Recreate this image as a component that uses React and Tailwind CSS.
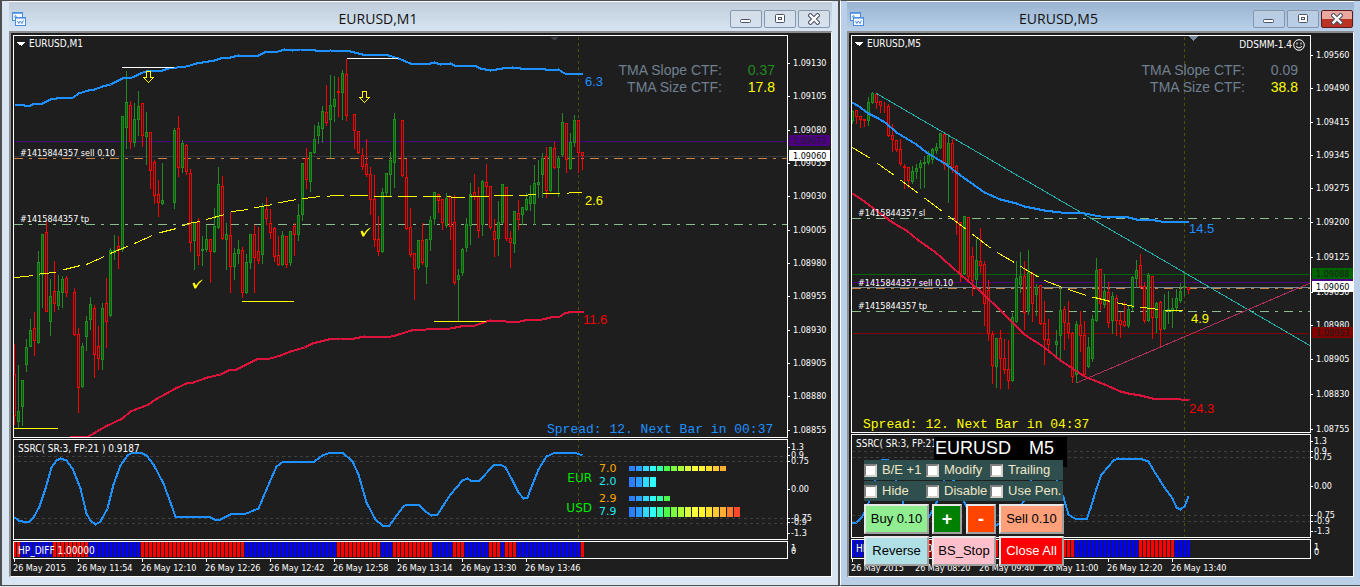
const UI = "font-['DejaVu_Sans_Condensed','Noto_Sans',sans-serif]";
const ARIAL = "font-['Liberation_Sans',Arial,sans-serif]";

// [direction, high, low, body top, body bottom], one slot every 4px, null = no bar
const M1_CANDLES = [
  ["r", 343, 424, 374, 415], ["g", 364, 427, 411, 421], ["g", 379, 425, 380, 406],
  ["g", 338, 371, 347, 364], ["g", 318, 346, 330, 346], ["r", 311, 355, 328, 340],
  ["g", 250, 343, 262, 342], ["g", 234, 307, 234, 274], ["r", 220, 311, 232, 311],
  ["g", 278, 335, 296, 321], ["r", 260, 311, 291, 303], ["g", 274, 309, 291, 305],
  ["g", 275, 307, 279, 292], ["r", 275, 296, 278, 292], null,
  ["r", 287, 335, 292, 334], ["r", 327, 412, 334, 387], ["g", 342, 387, 346, 386],
  ["g", 315, 350, 321, 336], ["g", 296, 329, 304, 319], ["r", 304, 377, 308, 354],
  ["r", 325, 369, 346, 358], ["g", 302, 369, 308, 359], ["r", 277, 347, 303, 321],
  ["g", 247, 316, 250, 315], ["g", 234, 259, 250, 252], ["r", 235, 268, 246, 249],
  ["g", 116, 251, 116, 249], ["g", 70, 148, 102, 127], ["r", 100, 148, 105, 141],
  ["g", 102, 146, 119, 142], ["g", 90, 135, 106, 119], ["r", 103, 146, 103, 135],
  ["g", 111, 164, 132, 136], ["r", 132, 188, 132, 170], ["r", 159, 203, 162, 195],
  ["r", 179, 216, 194, 202], ["g", 162, 204, 200, 203], null, null,
  ["g", 127, 208, 130, 202], ["r", 115, 176, 128, 167], ["g", 139, 172, 143, 167],
  ["r", 143, 174, 145, 171], ["r", 168, 251, 173, 242], ["g", 222, 269, 222, 240],
  ["r", 217, 264, 221, 255], ["g", 235, 265, 249, 250], ["g", 224, 251, 239, 249],
  ["r", 238, 282, 239, 251], ["g", 207, 252, 226, 251], ["g", 166, 228, 184, 227],
  ["r", 175, 239, 186, 238], ["g", 222, 269, 234, 239], ["r", 211, 292, 235, 266],
  ["g", 247, 279, 253, 266], ["g", 239, 263, 249, 253], ["r", 246, 297, 250, 292],
  ["g", 253, 293, 262, 292], ["g", 233, 268, 234, 262], ["r", 224, 292, 234, 257],
  ["r", 226, 263, 251, 260], ["g", 202, 263, 206, 254], ["r", 196, 224, 209, 218],
  ["r", 208, 238, 223, 232], ["r", 226, 261, 228, 256], ["r", 235, 265, 255, 264],
  ["g", 230, 265, 235, 264], ["r", 235, 267, 236, 264], ["g", 231, 265, 231, 262],
  ["r", 222, 255, 226, 234], ["g", 203, 240, 215, 234], ["g", 163, 220, 163, 214],
  ["r", 147, 188, 158, 179], ["g", 151, 191, 152, 181], ["g", 124, 153, 139, 152],
  ["g", 121, 143, 126, 135], ["g", 105, 142, 111, 128], ["r", 84, 125, 112, 122],
  ["g", 74, 157, 105, 119], ["g", 75, 121, 99, 106], ["r", 76, 116, 91, 92],
  ["g", 69, 119, 73, 92], ["r", 58, 120, 74, 115], null,
  ["r", 114, 148, 114, 130], ["r", 130, 153, 131, 152], ["r", 147, 169, 155, 166],
  ["r", 138, 176, 164, 174], ["r", 166, 214, 174, 199], ["r", 174, 246, 199, 239],
  ["r", 215, 255, 239, 251], ["g", 187, 252, 192, 251], ["g", 173, 195, 173, 192],
  ["g", 151, 196, 160, 174], ["g", 112, 187, 119, 162], null,
  ["r", 119, 176, 120, 175], ["r", 158, 229, 177, 228], ["r", 207, 256, 227, 254],
  ["r", 253, 299, 253, 268], ["g", 239, 269, 240, 267], ["r", 222, 264, 240, 262],
  ["g", 239, 283, 239, 266], ["g", 215, 250, 220, 239], ["g", 192, 224, 192, 218],
  ["r", 193, 212, 194, 200], ["r", 198, 229, 199, 222], ["g", 192, 227, 198, 225],
  ["r", 196, 239, 196, 226], ["r", 194, 284, 222, 282], ["g", 268, 321, 275, 279],
  ["g", 247, 275, 249, 272], ["g", 217, 251, 224, 247], ["g", 182, 244, 194, 225],
  ["r", 173, 199, 192, 196], ["r", 186, 237, 196, 230], ["g", 179, 235, 181, 224],
  ["r", 163, 196, 182, 186], ["r", 186, 229, 186, 227], ["r", 218, 256, 231, 239],
  ["g", 200, 255, 222, 238], ["g", 183, 223, 184, 222], ["r", 187, 240, 187, 238],
  ["r", 230, 267, 238, 242], ["g", 210, 252, 211, 243], ["r", 199, 229, 213, 219],
  ["g", 207, 224, 207, 214], ["g", 192, 210, 199, 209], ["g", 184, 210, 196, 203],
  ["g", 164, 224, 183, 203], ["g", 159, 197, 182, 184], ["g", 152, 197, 158, 174],
  ["r", 146, 197, 156, 190], ["g", 147, 191, 147, 190], ["r", 141, 168, 148, 167],
  ["g", 155, 196, 158, 167], ["g", 112, 156, 122, 154], ["r", 123, 172, 123, 159],
  ["g", 132, 169, 142, 168], ["g", 114, 146, 120, 142], ["r", 120, 172, 120, 152],
  ["r", 152, 169, 152, 155],
];

const M5_CANDLES = [
  ["g", 109, 123, 111, 120], ["r", 110, 123, 110, 116], ["r", 115, 127, 116, 119],
  ["r", 119, 126, 119, 120], ["g", 96, 125, 102, 120], ["g", 91, 103, 93, 102],
  ["r", 93, 108, 94, 102], ["r", 101, 112, 101, 105], ["r", 101, 112, 106, 106],
  ["r", 103, 136, 106, 135], ["r", 123, 151, 135, 139], ["r", 139, 151, 140, 149],
  ["r", 138, 165, 149, 163], ["r", 163, 188, 166, 167], ["r", 167, 187, 167, 180],
  ["g", 165, 183, 171, 181], ["g", 163, 178, 168, 171], ["g", 159, 188, 163, 167],
  ["g", 155, 187, 162, 163], ["g", 150, 164, 155, 162], ["g", 147, 163, 149, 159],
  ["g", 142, 153, 147, 150], ["g", 133, 148, 133, 147], ["r", 133, 169, 134, 164],
  ["g", 133, 202, 143, 164], ["r", 138, 172, 143, 167], ["r", 164, 234, 166, 221],
  ["r", 222, 281, 222, 273], ["g", 216, 274, 216, 273], ["r", 217, 281, 217, 276],
  ["r", 246, 295, 256, 280], ["g", 238, 287, 260, 279], ["r", 227, 272, 261, 265],
  ["r", 260, 325, 264, 303], ["r", 279, 340, 290, 333], ["r", 330, 383, 334, 365],
  ["g", 337, 387, 338, 366], ["r", 329, 388, 338, 358], ["r", 338, 373, 358, 369],
  ["r", 339, 388, 369, 380], ["g", 312, 381, 317, 380], ["g", 260, 322, 278, 321],
  ["g", 251, 292, 276, 284], ["r", 260, 329, 276, 312], ["g", 249, 314, 272, 311],
  ["r", 271, 321, 273, 303], ["g", 283, 315, 287, 294], ["r", 285, 324, 285, 323],
  ["r", 300, 364, 323, 339], ["r", 318, 352, 339, 344], null,
  ["g", 329, 356, 341, 344], ["g", 287, 361, 310, 335], ["r", 305, 349, 309, 322],
  ["r", 300, 338, 323, 332], ["r", 331, 382, 333, 376], ["g", 320, 382, 324, 374],
  ["r", 310, 351, 325, 335], ["r", 320, 376, 335, 374], ["g", 336, 367, 347, 366],
  ["g", 314, 361, 319, 358], ["g", 257, 321, 270, 320], ["r", 269, 309, 269, 303],
  ["g", 273, 307, 291, 304], ["r", 281, 327, 292, 322], ["g", 291, 333, 296, 320],
  ["r", 294, 335, 298, 320], ["r", 311, 337, 320, 324], ["r", 301, 326, 321, 325],
  ["g", 305, 327, 309, 325], ["g", 275, 310, 277, 307], ["g", 259, 287, 270, 278],
  ["r", 253, 288, 265, 286], ["r", 281, 322, 286, 320], ["g", 272, 321, 275, 320],
  ["r", 275, 338, 276, 317], ["g", 301, 332, 303, 317], ["r", 300, 346, 302, 329],
  ["g", 293, 329, 310, 328], ["g", 290, 323, 309, 310], ["g", 297, 327, 308, 311],
  ["g", 288, 311, 298, 307], ["g", 282, 302, 291, 300], ["g", 272, 295, 286, 287],
  ["r", 286, 293, 287, 289],
];

const M1_UPPER =
  "14,104 20,104 24,105 30,105 34,103 42,103 50,99 56,98 73,97 78,93 88,90 94,89 102,86 110,84 122,78 132,77 140,73 148,70 162,70 168,68 186,66 196,63 214,60 220,58 230,57 238,55 256,56 264,52 278,51 284,49 292,50 300,49 310,49 320,51 330,50 350,51 362,54 376,54 388,55 398,58 410,63 430,63 434,62 440,64 450,63 454,65 474,65 480,68 490,70 502,68 512,67 520,68 540,68 550,70 558,69 564,73 572,74 583,73";
const M1_MIDDLE =
  "14,277 26,276 42,273 56,272 64,269 80,265 86,264 104,256 112,252 134,243 152,235 160,232 176,228 188,223 200,221 206,219 224,214 232,211 248,209 256,207 272,204 280,202 296,199 304,198 320,196 340,195 400,196 440,196 460,197 500,195 524,195 540,193 556,193 582,192";
const M1_LOWER =
  "70,437 88,436 105,426 122,418 130,411 148,404 155,399 166,393 175,388 186,383 193,382 207,377 220,374 228,370 236,369 248,363 256,359 270,358 280,355 290,351 304,347 312,343 328,339 340,338 354,338 364,336 386,337 395,335 411,330 426,329 450,328 460,326 475,325 486,321 490,320 505,321 515,322 524,320 542,319 550,317 560,316 564,313 572,311 583,311";
const M1_SSRC =
  "14,517 18,520 22,521 29,521 33,517 39,506 45,488 51,467 56,460 60,458 66,460 72,468 80,488 86,513 90,520 95,524 100,521 107,508 113,484 120,465 127,455 132,452 140,452 146,455 153,464 163,483 170,502 175,516 182,516 208,516 214,519 220,519 230,514 246,513 258,508 266,489 276,466 283,461 314,461 322,455 330,452 342,452 352,461 358,474 366,502 375,519 382,525 389,525 394,518 402,507 406,504 418,504 425,511 431,515 437,514 450,494 462,480 467,478 470,480 479,480 494,464 500,464 505,467 512,480 518,492 523,498 527,497 532,484 538,469 546,456 555,452 574,452 582,455";

const M5_UPPER =
  "852,102 860,107 868,113 878,118 886,123 896,132 906,138 916,144 926,152 936,158 946,164 960,175 970,182 984,192 1000,199 1016,203 1024,206 1044,210 1060,212 1084,213 1100,216 1128,217 1136,219 1150,219 1160,221 1180,222 1189,221";
const M5_MIDDLE =
  "852,147 870,158 894,175 918,193 942,211 966,229 988,246 1000,254 1014,262 1030,272 1044,280 1062,287 1086,295 1110,301 1134,306 1158,309 1170,310 1184,310";
const M5_LOWER =
  "852,193 864,201 880,213 892,222 906,230 918,240 934,251 960,274 980,291 1000,310 1024,334 1044,347 1060,360 1075,370 1086,377 1094,380 1104,384 1120,391 1128,393 1140,395 1152,398 1172,398 1189,400";
const M5_SSRC =
  "852,523 856,522 861,517 866,509 872,490 878,468 882,459 887,459 895,478 903,504 910,522 920,524 928,517 935,505 942,484 947,470 953,480 964,502 975,524 997,524 1010,518 1024,500 1032,476 1042,466 1056,478 1063,497 1068,514 1074,518 1086,519 1090,508 1096,488 1101,474 1108,466 1113,460 1118,458 1142,459 1148,461 1155,473 1164,487 1172,498 1176,507 1180,509 1184,506 1188,496";

// [colour, number of bars]
const M1_DIFF = [
  ["r", 2], ["b", 8], ["r", 9], ["b", 13], ["r", 26], ["b", 23], ["r", 11], ["b", 3], ["r", 10],
  ["b", 5], ["r", 3], ["b", 6], ["r", 3], ["b", 1], ["r", 3], ["b", 16], ["r", 1],
];
const M5_DIFF = [["b", 18], ["r", 38], ["b", 16], ["r", 9], ["b", 4]];

const STRENGTH_COLORS = [
  "bg-[#2b7fff]", "bg-[#2b9cff]", "bg-[#2fdcff]", "bg-[#2ffcff]", "bg-[#2fffa8]", "bg-[#4cf84c]",
  "bg-[#7cff3a]", "bg-[#a8ff3a]", "bg-[#d8ff3a]", "bg-[#fdff3a]", "bg-[#fff52a]", "bg-[#ffe030]",
  "bg-[#ffc830]", "bg-[#ffb030]", "bg-[#ff7a2a]", "bg-[#ff4a2a]",
];

function Candles({ data, start }) {
  return data.map((c, i) => {
    if (!c) return null;
    const [dir, high, low, top, bottom] = c;
    const x = start + i * 4;
    return (
      <g key={x} stroke={dir === "g" ? "#228b22" : "#ff0000"}>
        <line x1={x} x2={x} y1={high} y2={low} />
        <rect x={x - 1} y={top} width={2} height={bottom - top} fill={dir === "g" ? "#006400" : "#1e1e1e"} />
      </g>
    );
  });
}

function DiffBars({ runs, start, y, height }) {
  const bars = runs.flatMap(([color, count]) => Array(count).fill(color));
  return bars.map((color, i) => (
    <rect key={i} x={start + i * 4 - 1} y={y} width={3} height={height} fill={color === "r" ? "#ff0000" : "#0000ff"} />
  ));
}

function HLine({ y, color, dash, from = 0, to = 2400 }) {
  return <line x1={from - 0.5} x2={to - 0.5} y1={y} y2={y} stroke={color} strokeDasharray={dash} />;
}

function VLine({ x }) {
  return <line x1={x} x2={x} y1={0} y2={700} stroke="#4f4f08" strokeDasharray="3 3" />;
}

// Dashes keep the same width on the time scale whatever the slope: 18px on, 6px off
function DashedCurve({ points, color }) {
  const pts = points.split(" ").map((p) => p.split(",").map(Number));
  const end = pts[pts.length - 1][0];
  const yAt = (x) => {
    const i = Math.max(1, pts.findIndex((p) => p[0] >= x));
    const [x0, y0] = pts[i - 1];
    const [x1, y1] = pts[i];
    return y0 + ((y1 - y0) * (x - x0)) / (x1 - x0);
  };
  const dashes = [];
  for (let x = pts[0][0]; x < end; x += 24) {
    const stop = Math.min(x + 18, end);
    const inner = pts.filter((p) => p[0] > x && p[0] < stop);
    dashes.push([[x, yAt(x)], ...inner, [stop, yAt(stop)]].map((p) => p.join(",")).join(" "));
  }
  return dashes.map((d) => <polyline key={d} points={d} fill="none" stroke={color} />);
}

function Label({ x, y, fill = "#fff", size = "text-[9px]", font = UI, children }) {
  return (
    <text x={x} y={y} fill={fill} stroke="none" className={`${font} ${size} whitespace-pre`}>
      {children}
    </text>
  );
}

function ArrowDown({ x, y }) {
  return (
    <path
      d={`M${x - 2} ${y}h4v6h3l-5 5l-5-5h3z`}
      fill="none"
      stroke="#ffff00"
    />
  );
}

function Check({ x, y }) {
  return (
    <path
      d={`M${x - 5} ${y}l2-1l1.5 3q3-5 7-6q-4 3.500-7 9h-1.500z`}
      fill="#ffff00"
      stroke="none"
      shapeRendering="auto"
    />
  );
}

// One framed plot with its scale on the right. ox/oy place the drawing's origin.
function Pane({ height, ox, oy, axis, axisWidth = "w-[42px]", children, labels, overlay }) {
  return (
    <div className={`flex ${height}`}>
      <div className="relative min-w-0 flex-1 overflow-hidden border border-white">
        <svg className="block h-full w-full" shapeRendering="crispEdges">
          <g transform={`translate(${0.5 - ox} ${0.5 - oy})`}>{children}</g>
          <g transform={`translate(${-ox} ${-oy})`}>{labels}</g>
        </svg>
        {overlay}
      </div>
      <svg className={`block h-full shrink-0 overflow-visible ${axisWidth}`}>
        <g transform={`translate(0 ${1 - oy})`}>{axis}</g>
      </svg>
    </div>
  );
}

function Scale({ values, x = 5, ticks = true }) {
  return values.map(([y, text]) => (
    <g key={text}>
      {ticks && <rect x={0} y={y} width={2} height={1} fill="#fff" />}
      <Label x={x} y={y + 3}>{text}</Label>
    </g>
  ));
}

function PriceTag({ y, bg, fill = "#1e1e1e", children }) {
  return (
    <g>
      <rect x={1} y={y} width={41} height={11} fill={bg} />
      <Label x={5} y={y + 9} fill={fill}>{children}</Label>
    </g>
  );
}

function TimeAxis({ labels }) {
  return (
    <div className={`flex h-[17px] overflow-hidden text-[9px] text-white ${UI}`}>
      {labels.map((label) => (
        <span key={label} className="w-16 shrink-0 whitespace-nowrap leading-[13px]">
          <span className="ml-px block h-[3px] w-px bg-white" />
          {label}
        </span>
      ))}
    </div>
  );
}

function ChartIcon() {
  return (
    <svg className="mt-1" width="14" height="14" viewBox="0 0 14 14" fill="#f4f9ff" stroke="#4a8de0">
      <rect x=".5" y=".5" width="10" height="8" />
      <path d="M1 1h10" strokeWidth="1.500" />
      <path d="M2 5.500l1.500-2l1 2" fill="none" />
      <rect x="3.500" y="5.500" width="10" height="8" />
      <path d="M3 5.800h11" strokeWidth="1.500" />
      <path d="M5.500 9l1.200 2.500l1.600-2.500l1.600 2.500l1.600-3" fill="none" />
    </svg>
  );
}

function CaptionButton({ kind, label, danger }) {
  return (
    <button
      aria-label={label}
      className={
        danger
          ? "flex h-[18px] w-8 items-center justify-center rounded-xs border border-[#5c1a20] bg-linear-to-b from-[#e9a99f] from-50% to-[#bb3322] to-50%"
          : "flex h-[18px] w-8 items-center justify-center rounded-xs border border-[#8795ad] bg-linear-to-b from-white/25 to-white/5"
      }
    >
      <svg width="12" height="12" viewBox="0 0 12 12" fill="#fff" stroke="#4b5166">
        {kind === "min" && <rect x=".5" y="6.500" width="10" height="3" rx="1" />}
        {kind === "max" && (
          <>
            <rect x="1.500" y="1.500" width="9" height="8" rx="1" />
            <rect x="4.500" y="4.500" width="3" height="2" />
          </>
        )}
        {kind === "close" && (
          <>
            <path d="M2.500 2.500l7 7M9.500 2.500l-7 7" strokeWidth="4.500" strokeLinecap="square" />
            <path d="M2.500 2.500l7 7M9.500 2.500l-7 7" stroke="#fff" strokeWidth="2.400" strokeLinecap="square" />
          </>
        )}
      </svg>
    </button>
  );
}

function TitleBar({ title, active }) {
  return (
    <header
      className={
        active
          ? "flex h-[30px] items-center border-t border-white bg-linear-to-b from-[#9ab3d0] to-[#b9d1ea] pr-px pl-[3px]"
          : "flex h-[30px] items-center border-t border-white bg-linear-to-b from-[#bfccda] to-[#d8e5f2] pr-[2px] pl-[3px]"
      }
    >
      <ChartIcon />
      <h1 className="flex-1 pt-1 text-center font-['Open_Sans','Noto_Sans',sans-serif] text-sm leading-5 text-[#111]">
        {title}
      </h1>
      <div className="flex gap-[2px] pt-[5px]">
        <CaptionButton kind="min" label="Minimize" />
        <CaptionButton kind="max" label="Maximize" />
        <CaptionButton kind="close" label="Close" danger={active} />
      </div>
    </header>
  );
}

function TmaReadout({ slope, slopeClass, size }) {
  return (
    <dl
      className={`absolute top-[26px] right-3 grid grid-cols-[1fr_53px] text-right text-[14px] leading-[17px] text-[#708090] ${ARIAL}`}
    >
      <dt>TMA Slope CTF:</dt>
      <dd className={slopeClass}>{slope}</dd>
      <dt>TMA Size CTF:</dt>
      <dd className="text-[#ffff00]">{size}</dd>
    </dl>
  );
}

function Meter({ value, count, thick, valueClass }) {
  return (
    <div className="flex h-[13px] items-center">
      <span className={`w-[30px] text-[11px] leading-[13px] ${valueClass}`}>{value}</span>
      <span className="flex gap-px">
        {STRENGTH_COLORS.slice(0, count).map((color) => (
          <i key={color} className={`w-[6px] ${thick ? "h-[10px]" : "h-[5px]"} ${color}`} />
        ))}
      </span>
    </div>
  );
}

function Strength({ name, fast, fastCount, slow, slowCount }) {
  return (
    <div className="flex items-center gap-[7px]">
      <span className="w-[26px] pt-[6px] text-right text-[12px] leading-4 text-[#00e800]">{name}</span>
      <div>
        <Meter value={fast} count={fastCount} valueClass="text-[#ffa500]" />
        <Meter value={slow} count={slowCount} thick valueClass="text-[#20e8f0]" />
      </div>
    </div>
  );
}

function WindowM1() {
  return (
    <section className="min-w-0 border-t border-r-2 border-b border-l-2 border-[#4c4e52] bg-[#d9e5f3]">
      <div className="pr-[6px] pb-2 pl-[7px]">
        <TitleBar title="EURUSD,M1" />
        <div className="flex flex-col gap-px border-t-2 border-r border-b border-l-2 border-t-[#8a8c8f] border-r-white border-b-white border-l-[#8a8c8f] bg-[#1e1e1e] pt-[2px] pl-[2px]">
          <Pane
            height="h-[403px]"
            axisWidth="w-[43px]"
            ox={14}
            oy={36}
            axis={
              <>
                <Scale
                  values={[
                    [63, "1.09130"], [96, "1.09105"], [130, "1.09080"], [163, "1.09055"],
                    [196, "1.09030"], [230, "1.09005"], [263, "1.08980"], [296, "1.08955"],
                    [330, "1.08930"], [363, "1.08905"], [396, "1.08880"], [430, "1.08855"],
                  ]}
                />
                <PriceTag y={135} bg="#4b0082">1.09072</PriceTag>
                <PriceTag y={150} bg="#fff" fill="#000">1.09060</PriceTag>
              </>
            }
            labels={
              <>
                <Label x={29} y={47} size="text-[10px]">EURUSD,M1</Label>
                <Label x={20} y={156}>#1415844357 sell 0.10</Label>
                <Label x={20} y={222}>#1415844357 tp</Label>
                <Label x={585} y={86} fill="#1e90ff" size="text-[13px]" font={ARIAL}>6.3</Label>
                <Label x={585} y={205} fill="#ffff00" size="text-[13px]" font={ARIAL}>2.6</Label>
                <Label x={583} y={324} fill="#f00000" size="text-[13px]" font={ARIAL}>11.6</Label>
                <Label x={547} y={433} fill="#1e90ff" size="text-[13px]" font="font-['Liberation_Mono',monospace]">
                  Spread: 12. Next Bar in 00:37
                </Label>
              </>
            }
            overlay={<TmaReadout slope="0.37" slopeClass="text-[#228b22]" size="17.8" />}
          >
            <VLine x={578} />
            <path d="M549 36h9l-4 4z" fill="#3c4046" />
            <HLine y={141} color="#4b0082" />
            <HLine y={156} color="#34373c" />
            <HLine y={158} color="#cd853f" dash="9 6 3 6" from={14} />
            <HLine y={224} color="#8fbc8f" dash="9 6 3 6" from={14} />
            <Candles data={M1_CANDLES} start={14} />
            <DashedCurve points={M1_MIDDLE} color="#ffff00" />
            <polyline points={M1_UPPER} fill="none" stroke="#1e90ff" strokeWidth="2" />
            <polyline points={M1_LOWER} fill="none" stroke="#dc143c" strokeWidth="2" />
            <HLine y={67} from={122} to={174} color="#fff" />
            <HLine y={58} from={347} to={398} color="#fff" />
            <HLine y={428} from={14} to={58} color="#ffff00" />
            <HLine y={301} from={242} to={294} color="#ffff00" />
            <HLine y={321} from={434} to={486} color="#ffff00" />
            <ArrowDown x={148} y={71} />
            <ArrowDown x={364} y={91} />
            <Check x={197} y={283} />
            <Check x={365} y={231} />
            <path d="M17 42h7l-3 3z" fill="#fff" stroke="#fff" />
          </Pane>
          <Pane
            height="h-[101px]"
            axisWidth="w-[43px]"
            ox={14}
            oy={440}
            axis={
              <Scale
                x={3}
                values={[
                  [447, "1.3"], [455, "0.9"], [461, "0.75"], [489, "0.00"],
                  [518, "-0.75"], [522, "-0.9"], [533, "-1.3"],
                ]}
              />
            }
            labels={<Label x={18} y={452} size="text-[10px]">SSRC( SR:3, FP:21 ) 0.9187</Label>}
            overlay={
              <div className="absolute top-[22px] left-[552px] flex flex-col gap-1 font-['DejaVu_Sans',sans-serif]">
                <Strength name="EUR" fast="7.0" fastCount={14} slow="2.0" slowCount={4} />
                <Strength name="USD" fast="2.9" fastCount={6} slow="7.9" slowCount={16} />
              </div>
            }
          >
            <VLine x={578} />
            {[456, 461, 518, 523].map((y) => (
              <HLine key={y} y={y} color="#404040" dash="3 3" />
            ))}
            <polyline points={M1_SSRC} fill="none" stroke="#1e90ff" strokeWidth="2" />
          </Pane>
          <Pane
            height="h-[18px]"
            axisWidth="w-[43px]"
            ox={14}
            oy={542}
            axis={<Scale x={3} ticks={false} values={[[548, "1"], [551, "0"]]} />}
            labels={
              <>
                <DiffBars runs={M1_DIFF} start={14} y={542} height={15} />
                <Label x={18} y={554} size="text-[10px]">HP_DIFF 1.00000</Label>
              </>
            }
          />
          <div className="-mt-px">
            <TimeAxis
              labels={[
                "26 May 2015", "26 May 11:54", "26 May 12:10", "26 May 12:26", "26 May 12:42",
                "26 May 12:58", "26 May 13:14", "26 May 13:30", "26 May 13:46",
              ]}
            />
          </div>
        </div>
      </div>
    </section>
  );
}

function Option({ children }) {
  return (
    <label className="flex items-center gap-[5px] whitespace-nowrap">
      <input
        type="checkbox"
        className="size-[13px] shrink-0 appearance-none border-2 border-t-[#808080] border-r-[#d4d0c8] border-b-[#d4d0c8] border-l-[#808080] bg-white"
      />
      {children}
    </label>
  );
}

function PanelButton({ className, children }) {
  return (
    <button
      className={`h-[30px] border-2 border-t-[#e8e8e8] border-r-[#a0a0a0] border-b-[#a0a0a0] border-l-[#e8e8e8] text-center whitespace-nowrap ${className}`}
    >
      {children}
    </button>
  );
}

function TradePanel() {
  return (
    <form
      className={`absolute top-[404px] left-[15px] w-[200px] text-[13px] leading-4 text-black ${ARIAL}`}
      onSubmit={(e) => e.preventDefault()}
    >
      <h2 className="ml-[70px] flex h-[30px] w-[133px] gap-[18px] bg-black pl-px text-[18px] leading-[23px] text-white">
        <span>EURUSD</span>
        <span>M5</span>
      </h2>
      <div className="relative -mt-[7px] flex flex-col gap-px text-[#f0e6c8]">
        <div className="grid h-5 w-[199px] grid-cols-[62px_64px_73px] bg-[#2f4f4f]">
          <Option>B/E +1</Option>
          <Option>Modify</Option>
          <Option>Trailing</Option>
        </div>
        <div className="grid h-5 w-[199px] grid-cols-[62px_64px_73px] bg-[#2f4f4f]">
          <Option>Hide</Option>
          <Option>Disable</Option>
          <Option>Use Pen.</Option>
        </div>
      </div>
      <div className="mt-[3px] grid grid-cols-[65px_64px_65px] gap-x-[3px] gap-y-[2px]">
        <PanelButton className="bg-[#90ee90]">Buy 0.10</PanelButton>
        <div className="flex gap-1">
          <PanelButton className="w-[30px] bg-[#008000] text-[18px] font-bold text-white">+</PanelButton>
          <PanelButton className="w-[30px] bg-[#ff4500] text-[18px] font-bold text-white">-</PanelButton>
        </div>
        <PanelButton className="bg-[#ffa07a]">Sell 0.10</PanelButton>
        <PanelButton className="bg-[#b0e0e6]">Reverse</PanelButton>
        <PanelButton className="bg-[#ffc0cb]">BS_Stop</PanelButton>
        <PanelButton className="bg-[#ff0000] text-white">Close All</PanelButton>
      </div>
    </form>
  );
}

function WindowM5() {
  return (
    <section className="min-w-0 border-t border-b border-l border-[#4c4e52] border-l-white bg-[#bad0e9]">
      <div className="pr-[6px] pb-2 pl-[6px]">
        <TitleBar title="EURUSD,M5" active />
        <div className="relative flex flex-col gap-px border-t-2 border-r border-b border-l-2 border-t-[#8a8c8f] border-r-white border-b-white border-l-[#8a8c8f] bg-[#1e1e1e] pt-[2px] pl-[2px]">
          <Pane
            height="h-[398px]"
            ox={852}
            oy={36}
            axis={
              <>
                <Scale
                  values={[
                    [55, "1.09560"], [88, "1.09490"], [122, "1.09415"], [155, "1.09345"],
                    [188, "1.09275"], [222, "1.09200"], [257, "1.09125"], [292, "1.09050"],
                    [325, "1.08980"], [359, "1.08905"], [394, "1.08830"], [429, "1.08755"],
                  ]}
                />
                <rect x={1} y={278} width={41} height={11} fill="#4b0082" />
                <PriceTag y={268} bg="#006400">1.09088</PriceTag>
                <PriceTag y={281} bg="#fff" fill="#000">1.09060</PriceTag>
                <PriceTag y={327} bg="#800000">1.08963</PriceTag>
              </>
            }
            labels={
              <>
                <Label x={867} y={47} size="text-[10px]">EURUSD,M5</Label>
                <Label x={858} y={216}>#1415844357 sl</Label>
                <Label x={858} y={286}>#1415844357 sell 0.10</Label>
                <Label x={858} y={309}>#1415844357 tp</Label>
                <Label x={1189} y={233} fill="#1e90ff" size="text-[13px]" font={ARIAL}>14.5</Label>
                <Label x={1191} y={323} fill="#ffff00" size="text-[13px]" font={ARIAL}>4.9</Label>
                <Label x={1189} y={413} fill="#f00000" size="text-[13px]" font={ARIAL}>24.3</Label>
                <Label x={863} y={428} fill="#ffff00" size="text-[13px]" font="font-['Liberation_Mono',monospace]">
                  Spread: 12. Next Bar in 04:37
                </Label>
              </>
            }
            overlay={
              <>
                <TmaReadout slope="0.09" slopeClass="" size="38.8" />
                <div className={`absolute top-[3px] right-[5px] flex items-center gap-px text-[10px] leading-3 text-white ${UI}`}>
                  DDSMM-1.4
                  <svg width="12" height="12" viewBox="0 0 12 12" fill="none" stroke="#fff">
                    <circle cx="6" cy="6" r="5.300" />
                    <path d="M3 7.500q3 3 6 0M4 3.500v2M8 3.500v2" />
                  </svg>
                </div>
              </>
            }
          >
            <VLine x={1184} />
            <path d="M1189 36h8l-4 4z" fill="#778899" stroke="#778899" />
            <HLine y={274} color="#006400" />
            <HLine y={282} color="#4b0082" />
            <HLine y={287} color="#778899" />
            <HLine y={333} color="#800000" />
            <HLine y={218} color="#8fbc8f" dash="9 6 3 6" from={852} />
            <HLine y={288} color="#cd853f" dash="9 6 3 6" from={852} />
            <HLine y={311} color="#8fbc8f" dash="9 6 3 6" from={852} />
            <Candles data={M5_CANDLES} start={852} />
            <line x1="876" y1="93" x2="1311" y2="346" stroke="#20b2aa" />
            <line x1="1077" y1="382" x2="1311" y2="282" stroke="#b03060" />
            <DashedCurve points={M5_MIDDLE} color="#ffff00" />
            <polyline points={M5_UPPER} fill="none" stroke="#1e90ff" strokeWidth="2" />
            <polyline points={M5_LOWER} fill="none" stroke="#dc143c" strokeWidth="2" />
            <path d="M855 42h7l-3 3z" fill="#fff" stroke="#fff" />
          </Pane>
          <Pane
            height="h-[104px]"
            ox={852}
            oy={435}
            axis={
              <Scale
                x={3}
                values={[
                  [441, "1.3"], [451, "0.9"], [457, "0.75"], [486, "0.00"],
                  [515, "-0.75"], [521, "-0.9"], [531, "-1.3"],
                ]}
              />
            }
            labels={<Label x={856} y={447} size="text-[10px]">SSRC( SR:3, FP:21 )</Label>}
          >
            <VLine x={1184} />
            {[451, 457, 515, 521].map((y) => (
              <HLine key={y} y={y} color="#404040" dash="3 3" />
            ))}
            <polyline points={M5_SSRC} fill="none" stroke="#1e90ff" strokeWidth="2" />
          </Pane>
          <Pane
            height="h-[20px]"
            ox={852}
            oy={540}
            axis={<Scale x={3} ticks={false} values={[[547, "1"], [552, "0"]]} />}
            labels={
              <>
                <DiffBars runs={M5_DIFF} start={852} y={540} height={17} />
                <Label x={856} y={552} size="text-[10px]">HP_DIFF 1.00000</Label>
              </>
            }
          />
          <div className="-mt-px">
            <TimeAxis
              labels={["26 May 2015", "26 May 08:20", "26 May 09:40", "26 May 11:00", "26 May 12:20", "26 May 13:40"]}
            />
          </div>
          <TradePanel />
        </div>
      </div>
    </section>
  );
}

export default function App() {
  return (
    <main className="min-h-screen bg-[#e4e6e8]">
      <div className="grid grid-cols-[840fr_520fr]">
        <WindowM1 />
        <WindowM5 />
      </div>
    </main>
  );
}
